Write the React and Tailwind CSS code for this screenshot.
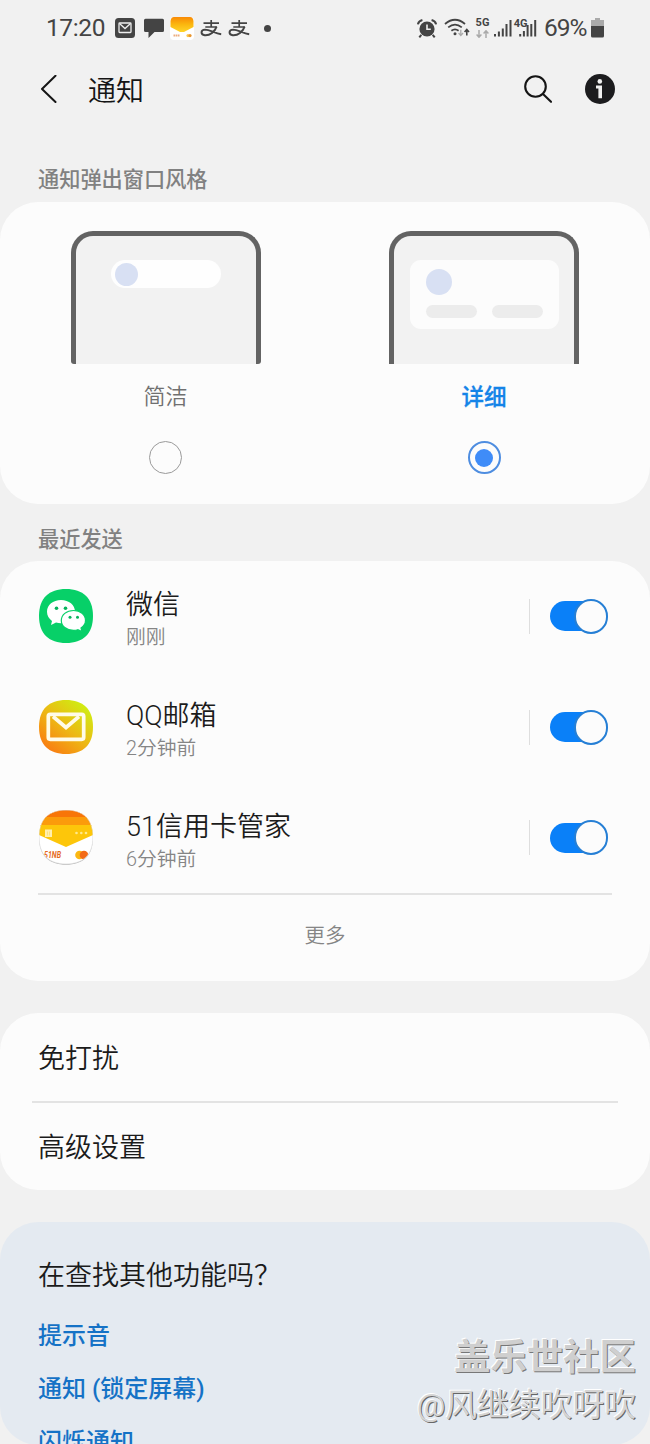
import React from "react";

const SQUIRCLE =
  "M27 0C44 0 54 9 54 27C54 45 44 54 27 54C10 54 0 45 0 27C0 9 10 0 27 0Z";

function AlipayGlyph() {
  return (
    <svg className="h-[18px] w-[22px]" viewBox="0 0 22 18" fill="none" stroke="#444" strokeWidth="1.7">
      <path d="M3.5 4.2H19M11.2 1V8M5.3 8H16.8" />
      <path d="M16.6 7.6C15 12.5 10 16.6 4.8 16.2C.3 15.6.5 10.8 5 10.6C10 10.7 14.5 14.2 21.2 15.2" strokeWidth="1.9" />
    </svg>
  );
}

function StatusBar() {
  return (
    <div className="flex h-14 items-center pr-[46px] pl-[46px] text-[#444]">
      <span className="w-[69px] text-[24.5px] leading-none font-normal tracking-[-0.4px]">17:20</span>
      <svg className="h-5 w-5" viewBox="0 0 20 20">
        <rect width="20" height="20" rx="3.5" fill="#444" />
        <rect x="4" y="5" width="12" height="9.5" rx=".7" fill="none" stroke="#eee" strokeWidth="1.3" />
        <path d="M4.5 5.6L10 10.6L15.5 5.6" fill="none" stroke="#eee" strokeWidth="1.3" />
      </svg>
      <svg className="ml-[9px] h-5 w-5" viewBox="0 0 20 20" fill="#444">
        <path d="M1.5 .8H18.5Q20 .8 20 2.3V12.5Q20 14 18.5 14H10.5L4.5 20V14H1.5Q0 14 0 12.5V2.3Q0 .8 1.5 .8Z" />
      </svg>
      <svg className="ml-[6px] h-[23px] w-6" viewBox="0 0 24 23">
        <defs>
          <linearGradient id="miniCard" x1="0" y1="0" x2="0" y2="1">
            <stop offset="0" stopColor="#f98a06" />
            <stop offset=".5" stopColor="#fbb70f" />
            <stop offset="1" stopColor="#ffd52a" />
          </linearGradient>
        </defs>
        <rect width="24" height="23" rx="4" fill="#fff" />
        <path d="M4 0H20Q23 0 23.5 4V10L14 15H10L.5 10V4Q1 0 4 0Z" fill="url(#miniCard)" />
        <path d="M3.5 18.6H10" stroke="#ecad7e" strokeWidth="2" strokeDasharray="1.5 .5" />
        <circle cx="18" cy="18.6" r="1.6" fill="#fcc84a" />
        <circle cx="20" cy="18.6" r="1.6" fill="#e9962f" />
      </svg>
      <div className="ml-[6px] flex gap-[6px]">
        <AlipayGlyph />
        <AlipayGlyph />
      </div>
      <span className="ml-[14px] h-[7px] w-[7px] rounded-full bg-[#444]" />
      <div className="ml-auto flex items-center">
        <svg className="h-[19px] w-5" viewBox="0 0 20 19">
          <circle cx="10" cy="10" r="7.6" fill="#444" />
          <path d="M.9 5.4Q1.6 2 5.4 1M14.6 1Q18.4 2 19.1 5.4M4.3 15.8L2.3 18.3M15.7 15.8L17.7 18.3" fill="none" stroke="#444" strokeWidth="2" />
          <path d="M10 5.4V10.3H13.8" fill="none" stroke="#eee" strokeWidth="1.6" />
        </svg>
        <svg className="ml-[7px] h-[20px] w-[26px]" viewBox="0 0 26 20" fill="none" stroke="#444" strokeWidth="1.8">
          <path d="M1 6Q11 -2.5 21 6M4.2 9.4Q11 3.8 17.8 9.4M7.4 12.8Q11 10 14.6 12.8" />
          <circle cx="11" cy="15.7" r="1.5" fill="#444" stroke="none" />
          <path d="M16.8 11.8V17M14.6 15L16.8 17.6L19 15" stroke="#aaa" strokeWidth="1.3" />
          <path d="M22.8 17.4V12M20.6 14L22.8 11.5L25 14" strokeWidth="1.6" />
        </svg>
        <div className="ml-[5px] flex h-5 w-[15px] flex-col items-center">
          <span className="text-[11px] leading-[10px] font-bold">5G</span>
          <svg className="mt-[2px] h-2 w-[13px]" viewBox="0 0 13 8" fill="none" stroke="#aaa" strokeWidth="1.5">
            <path d="M3 0V7M.6 4.6L3 7.2L5.4 4.6M10 8V1M7.6 3.4L10 .8L12.4 3.4" />
          </svg>
        </div>
        <svg className="ml-[4px] h-5 w-[44px]" viewBox="0 0 44 20" fill="#444">
          <path d="M0 16h2v2.500h-2zM3.900 13.500h2v5h-2zM7.800 10.500h2v8h-2zM11.500 6h2v12.500h-2zM15.500 2h2v16.500h-2z" />
          <path d="M25.200 16h2v2.500h-2zM28.900 13h2v5.500h-2zM32.600 7h2v11.500h-2zM36.300 6h2v12.500h-2zM40.200 2h2v16.500h-2z" />
          <text x="19.800" y="9.200" fontFamily="Roboto" fontSize="11" fontWeight="700">4G</text>
        </svg>
        <span className="ml-[6px] w-[47px] text-[24.5px] leading-none font-normal tracking-[-1px]">69%</span>
        <svg className="h-5 w-[13px]" viewBox="0 0 13 20">
          <path d="M4 0H9V2H13V8H0V2H4Z" fill="#aaa" />
          <path d="M0 8H13V18Q13 19.500 11.500 19.500H1.500Q0 19.500 0 18Z" fill="#444" />
        </svg>
      </div>
    </div>
  );
}

function Header() {
  return (
    <header className="flex h-[66px] items-center pr-[35px] pl-10">
      <svg className="h-7 w-[18px]" viewBox="0 0 18 28" fill="none" stroke="#151515" strokeWidth="2" strokeLinecap="round" strokeLinejoin="round">
        <path d="M15.500 .8L2 14L15.500 27" />
      </svg>
      <h1 className="ml-[30px] pt-[5px] text-[28px] leading-none text-[#151515]">通知</h1>
      <svg className="ml-auto h-7 w-7" viewBox="0 0 28 28" fill="none" stroke="#151515" strokeWidth="2.100" strokeLinecap="round">
        <circle cx="11.500" cy="11.500" r="10.300" />
        <path d="M19 19L27 26.800" />
      </svg>
      <svg className="ml-[33px] h-[30px] w-[30px]" viewBox="0 0 30 30">
        <circle cx="15" cy="15" r="15" fill="#1c1c1e" />
        <circle cx="14.800" cy="7.400" r="2.300" fill="#f1f1f1" />
        <path d="M11 11.500H17V24.200H13.400V14.500H11Z" fill="#f1f1f1" />
      </svg>
    </header>
  );
}

function PreviewFrame({ children, square }) {
  return (
    <div
      className={
        "flex h-[133px] w-[190px] flex-col items-center rounded-t-[22px] border-x-[5px] border-t-[5px] border-[#636363] bg-[#f2f2f2] " +
        (square ? "" : "rounded-b-[3px]")
      }
    >
      {children}
    </div>
  );
}

function StyleCard() {
  return (
    <section className="flex h-[302px] justify-between rounded-[38px] bg-[#fcfcfc] pr-[71px] pl-[70.500px] pt-[29px]">
      <div className="flex w-[190px] flex-col items-center">
        <PreviewFrame>
          <div className="mt-[24px] flex h-7 w-[110px] items-center rounded-full bg-[#fefefe] pl-1">
            <span className="h-[23px] w-[23px] rounded-full bg-[#d8e0f3]" />
          </div>
        </PreviewFrame>
        <span className="mt-[21px] text-[22px] leading-[24px] text-[#707070]">简洁</span>
        <span className="mt-[32px] h-[33px] w-[33px] rounded-full border-[1.500px] border-[#9a9a9a]" />
      </div>
      <div className="flex w-[190px] flex-col items-center">
        <PreviewFrame square>
          <div className="mt-[24px] h-[69px] w-[149px] rounded-[11px] bg-[#fcfcfc] px-4 pt-[9px]">
            <div className="h-[26px] w-[26px] rounded-full bg-[#d8e0f3]" />
            <div className="mt-[10px] flex justify-between">
              <span className="h-[13px] w-[51px] rounded-full bg-[#ececec]" />
              <span className="h-[13px] w-[51px] rounded-full bg-[#ececec]" />
            </div>
          </div>
        </PreviewFrame>
        <span className="mt-[21px] text-[22.5px] leading-[24px] font-medium text-[#1484e8] [-webkit-text-stroke:0.3px_#1484e8]">详细</span>
        <span className="mt-[32px] flex h-[33px] w-[33px] items-center justify-center rounded-full border-2 border-[#4e8de0]">
          <span className="h-[18px] w-[18px] rounded-full bg-[#3f8cf8]" />
        </span>
      </div>
    </section>
  );
}

function WeChatIcon() {
  return (
    <svg className="h-[54px] w-[54px]" viewBox="0 0 54 54">
      <path d={SQUIRCLE} fill="#07d068" />
      <path d="M22 11C14 11 8 16 8 22.800C8 26.500 9.900 29.800 13 32L12 36L17 33.500C18.500 34 20.500 34.300 22 34.300C30 34.300 36 29.500 36 22.800C36 16 30 11 22 11Z" fill="#fff" />
      <path d="M34.500 21.500C27.500 21.500 22.300 25.900 22.300 31.500C22.300 37.200 27.500 41.300 34.500 41.300C36 41.300 37.500 41.100 38.800 40.700L43 42.500L42 39C44.700 37.200 46.500 34.500 46.500 31.500C46.500 25.900 41.500 21.500 34.500 21.500Z" fill="#fff" stroke="#07d068" strokeWidth="1.200" />
      <g fill="#07b35b">
        <circle cx="17.500" cy="19.300" r="1.800" />
        <circle cx="26.500" cy="19.300" r="1.800" />
        <circle cx="31" cy="28.300" r="1.500" />
        <circle cx="38.500" cy="28.300" r="1.500" />
      </g>
    </svg>
  );
}

function MailIcon() {
  return (
    <svg className="h-[54px] w-[54px]" viewBox="0 0 54 54">
      <defs>
        <linearGradient id="mailBg" x1=".15" y1=".95" x2=".85" y2=".08">
          <stop offset="0" stopColor="#fa7a12" />
          <stop offset=".5" stopColor="#edb814" />
          <stop offset="1" stopColor="#cfee12" />
        </linearGradient>
      </defs>
      <path d={SQUIRCLE} fill="url(#mailBg)" />
      <rect x="9.300" y="14.300" width="35.400" height="25" rx="2" fill="none" stroke="#fffbe8" strokeWidth="3.700" />
      <path d="M14 16.500L27 27.500L40 16.500" fill="none" stroke="#fffbe8" strokeWidth="3.700" />
    </svg>
  );
}

function CreditCardIcon() {
  return (
    <svg className="h-[55px] w-[54px]" viewBox="0 0 54 55">
      <defs>
        <clipPath id="cardClip"><path d={SQUIRCLE} /></clipPath>
      </defs>
      <path d={SQUIRCLE} transform="translate(0 .8)" fill="#bbb" />
      <g clipPath="url(#cardClip)">
        <rect width="54" height="54" fill="#fff" />
        <rect width="54" height="8" fill="#f87508" />
        <rect y="7" width="54" height="9" fill="#fb9b0b" />
        <path d="M0 15H54V25L27 37L0 25Z" fill="#fdc60a" />
        <path d="M6 19.500H13V27H6Z" fill="#ffefae" />
        <path d="M8.500 21.500V25.500M10.500 21.500V25.500" stroke="#fbd65a" strokeWidth=".6" />
        <g fill="#ffe98d">
          <circle cx="37.500" cy="23" r="1.300" />
          <circle cx="42.300" cy="23" r="1.300" />
          <circle cx="47" cy="23" r="1.300" />
        </g>
        <circle cx="40.500" cy="45" r="4.300" fill="#fbb813" />
        <circle cx="45" cy="45" r="4.300" fill="#f36b16" />
        <path d={SQUIRCLE} fill="none" stroke="#ddd" strokeWidth=".8" />
        <text x="5" y="48" fontFamily="Roboto" fontSize="8.500" fontWeight="700" fontStyle="italic" fill="#e56a22" textLength="17" lengthAdjust="spacingAndGlyphs">51NB</text>
      </g>
    </svg>
  );
}

function Toggle() {
  return (
    <span className="flex h-[35px] w-[58px] items-center">
      <span className="flex h-[30px] w-[57px] items-center justify-end rounded-full bg-[#0a80f8]">
        <span className="-mr-[1px] h-[35px] w-[34px] shrink-0 rounded-full border-2 border-[#267fd5] bg-[#fcfcfc]" />
      </span>
    </span>
  );
}

function AppRow({ icon, name, time }) {
  return (
    <div className="flex h-[110.700px] items-center pr-[42px] pl-[39px]">
      {icon}
      <div className="ml-[33px] flex flex-col pt-[9px]">
        <span className="text-[27px] leading-[34px] text-[#1b1b1b]">{name}</span>
        <span className="text-[19.800px] leading-[31px] text-[#858585]">{time}</span>
      </div>
      <span className="mr-[20px] ml-auto h-[35px] w-[1.500px] bg-[#dedede]" />
      <Toggle />
    </div>
  );
}

export default function App() {
  return (
    <main className="relative h-[1444px] w-[650px] overflow-hidden bg-[#f1f1f1] font-['Roboto','Noto_Sans_CJK_SC',sans-serif] font-[350]">
      <StatusBar />
      <Header />
      <h2 className="flex h-20 items-end pb-[11px] pl-[38px] text-[21.200px] leading-[22px] font-medium text-[#818181]">通知弹出窗口风格</h2>
      <StyleCard />
      <h2 className="flex h-[57px] items-end pb-[10px] pl-[38px] text-[21.200px] leading-[22px] font-medium text-[#818181]">最近发送</h2>
      <section className="h-[420px] rounded-[38px] bg-[#fcfcfc]">
        <AppRow icon={<WeChatIcon />} name="微信" time="刚刚" />
        <AppRow icon={<MailIcon />} name="QQ邮箱" time="2分钟前" />
        <AppRow icon={<CreditCardIcon />} name="51信用卡管家" time="6分钟前" />
        <div className="mx-[38px] flex h-[82px] items-center justify-center border-t-2 border-[#e3e3e3] pt-[2px] text-[20.500px] text-[#858585]">更多</div>
      </section>
      <section className="mt-8 flex h-[177px] flex-col rounded-[38px] bg-[#fcfcfc] text-[27px] text-[#1b1b1b]">
        <div className="flex h-[88px] items-center pt-[5px] pl-[38px]">免打扰</div>
        <div className="mx-8 h-[1.500px] bg-[#e3e3e3]" />
        <div className="flex flex-1 items-center pt-[4px] pl-[38px]">高级设置</div>
      </section>
      <section className="mt-8 h-[223px] overflow-hidden rounded-[38px] bg-[#e4eaf1] pt-[36px] pl-[38px]">
        <h2 className="text-[27px] leading-[36px] text-[#1b1b1b]">在查找其他功能吗？</h2>
        <div className="mt-[16px] flex flex-col text-[24px] leading-[53px] font-medium text-[#1572c6]">
          <span>提示音</span>
          <span>通知 (锁定屏幕)</span>
          <span>闪烁通知</span>
        </div>
      </section>
      <div className="absolute right-[14px] bottom-[16px] flex flex-col items-end whitespace-nowrap">
        <span className="text-[36.400px] leading-[48px] font-bold text-[#cfcfcf] [text-shadow:1px_1px_0_#777,-1px_-1px_0_#fff]">盖乐世社区</span>
        <span className="text-[31.800px] leading-[46px] font-normal text-[#d4d4d4] [text-shadow:1px_1px_0_#666,-1px_-1px_0_#fff]">@风继续吹呀吹</span>
      </div>
    </main>
  );
}
